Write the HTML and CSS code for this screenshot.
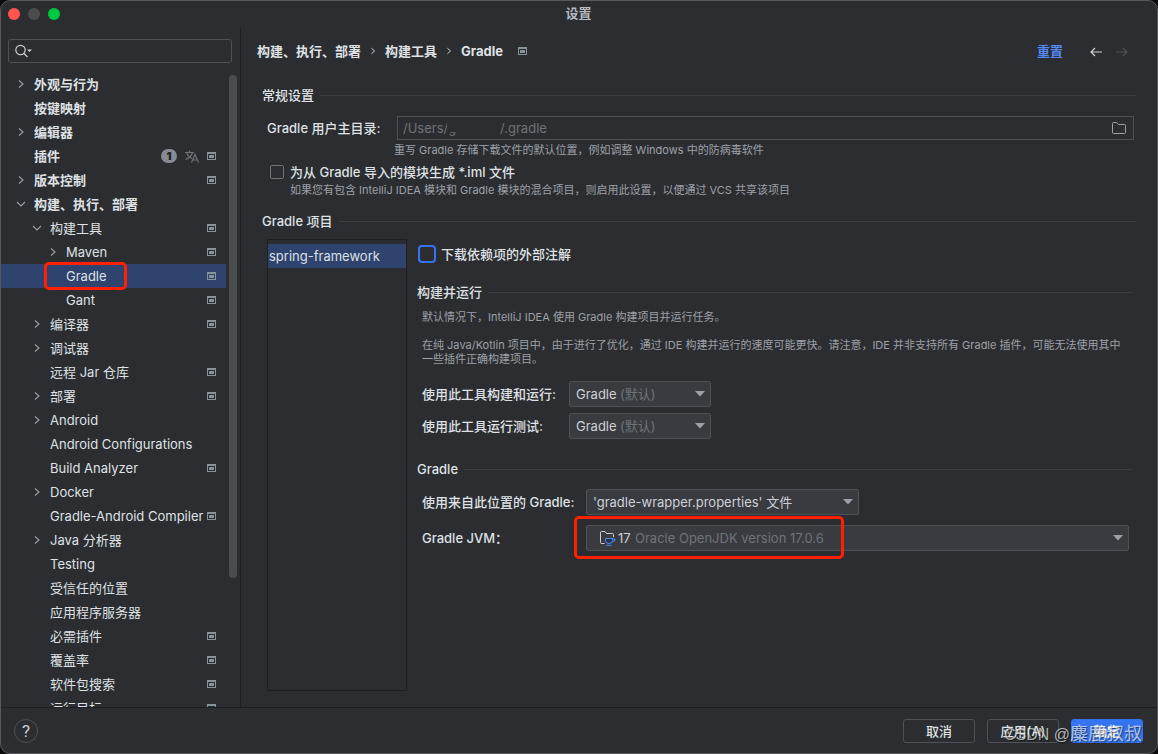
FILE: index.html
```html
<!DOCTYPE html>
<html lang="zh-CN">

<head>
  <meta charset="UTF-8">
  <title>设置</title>
  <link rel="stylesheet" href="styles.css">
</head>

<body>
  <svg class="sprite" width="0" height="0">
    <symbol id="right" viewBox="0 0 8 10"><path d="M2 1.5L6 5L2 8.5" fill="none" stroke="currentColor" stroke-width="1.1"/></symbol>
    <symbol id="down" viewBox="0 0 10 8"><path d="M1 2L5 6L9 2" fill="none" stroke="currentColor" stroke-width="1.1"/></symbol>
    <symbol id="project" viewBox="0 0 9 8"><path d="M0 0H9V8H0ZM1 2V7H8V2Z" fill="currentColor" fill-rule="evenodd"/><path d="M2 3H7V6H2Z" fill="currentColor"/></symbol>
    <symbol id="arrow" viewBox="0 0 10 6"><path d="M0 0H10L5 5.500Z" fill="currentColor"/></symbol>
  </svg>

  <div class="window">
    <header class="titlebar">
      <div class="lights">
        <span class="light red"></span>
        <span class="light gray"></span>
        <span class="light green"></span>
      </div>
      <h1>设置</h1>
    </header>

    <div class="content">
      <nav class="sidebar">
        <div class="search">
          <svg width="18" height="14" viewBox="0 0 18 14" fill="none" stroke="#ced0d6" stroke-width="1.2"><circle cx="5.500" cy="6" r="4.700"/><path d="M9 9.500L12.500 13"/><path d="M12 5.500H17L14.500 8Z" fill="#ced0d6" stroke="none"/></svg>
          <input type="text" aria-label="搜索">
        </div>
        <div class="tree-wrap">
          <ul class="tree">
            <li><a href="#" class="top"><svg class="chevron"><use href="#right"/></svg><span>外观与行为</span></a></li>
            <li><a href="#" class="top"><i class="chevron"></i><span>按键映射</span></a></li>
            <li><a href="#" class="top"><svg class="chevron"><use href="#right"/></svg><span>编辑器</span></a></li>
            <li><a href="#" class="top"><i class="chevron"></i><span>插件</span>
              <b class="badge">1</b>
              <svg class="lang" viewBox="0 0 14 13" fill="none" stroke="#6f737a" stroke-width="1.200"><path d="M0 2.500H9M4.500 0.500V2.500M7.500 2.500C6.500 6 3.500 8.500 0.500 9.500M1.500 2.500C2.500 5.500 4.500 7.500 7 8.500M6.500 12.500L10 4.500L13.500 12.500M7.800 10H12.200"/></svg>
              <svg class="project"><use href="#project"/></svg></a></li>
            <li><a href="#" class="top"><svg class="chevron"><use href="#right"/></svg><span>版本控制</span><svg class="project"><use href="#project"/></svg></a></li>
            <li><a href="#" class="top"><svg class="chevron"><use href="#down"/></svg><span>构建、执行、部署</span></a></li>
            <li><a href="#" class="level1"><svg class="chevron"><use href="#down"/></svg><span>构建工具</span><svg class="project"><use href="#project"/></svg></a></li>
            <li><a href="#" class="level2"><svg class="chevron"><use href="#right"/></svg><span>Maven</span><svg class="project"><use href="#project"/></svg></a></li>
            <li><a href="#" class="level2 selected"><i class="chevron"></i><span>Gradle</span><svg class="project"><use href="#project"/></svg><i class="mark mark-tree"></i></a></li>
            <li><a href="#" class="level2"><i class="chevron"></i><span>Gant</span><svg class="project"><use href="#project"/></svg></a></li>
            <li><a href="#" class="level1"><svg class="chevron"><use href="#right"/></svg><span>编译器</span><svg class="project"><use href="#project"/></svg></a></li>
            <li><a href="#" class="level1"><svg class="chevron"><use href="#right"/></svg><span>调试器</span></a></li>
            <li><a href="#" class="level1"><i class="chevron"></i><span>远程 Jar 仓库</span><svg class="project"><use href="#project"/></svg></a></li>
            <li><a href="#" class="level1"><svg class="chevron"><use href="#right"/></svg><span>部署</span><svg class="project"><use href="#project"/></svg></a></li>
            <li><a href="#" class="level1"><svg class="chevron"><use href="#right"/></svg><span>Android</span></a></li>
            <li><a href="#" class="level1"><i class="chevron"></i><span>Android Configurations</span></a></li>
            <li><a href="#" class="level1"><i class="chevron"></i><span>Build Analyzer</span><svg class="project"><use href="#project"/></svg></a></li>
            <li><a href="#" class="level1"><svg class="chevron"><use href="#right"/></svg><span>Docker</span></a></li>
            <li><a href="#" class="level1"><i class="chevron"></i><span>Gradle-Android Compiler</span><svg class="project"><use href="#project"/></svg></a></li>
            <li><a href="#" class="level1"><svg class="chevron"><use href="#right"/></svg><span>Java 分析器</span></a></li>
            <li><a href="#" class="level1"><i class="chevron"></i><span>Testing</span></a></li>
            <li><a href="#" class="level1"><i class="chevron"></i><span>受信任的位置</span></a></li>
            <li><a href="#" class="level1"><i class="chevron"></i><span>应用程序服务器</span></a></li>
            <li><a href="#" class="level1"><i class="chevron"></i><span>必需插件</span><svg class="project"><use href="#project"/></svg></a></li>
            <li><a href="#" class="level1"><i class="chevron"></i><span>覆盖率</span><svg class="project"><use href="#project"/></svg></a></li>
            <li><a href="#" class="level1"><i class="chevron"></i><span>软件包搜索</span><svg class="project"><use href="#project"/></svg></a></li>
            <li><a href="#" class="level1"><i class="chevron"></i><span>运行目标</span><svg class="project"><use href="#project"/></svg></a></li>
          </ul>
          <div class="scrollbar"></div>
        </div>
      </nav>

      <main class="main">
        <div class="breadcrumb">
          <a href="#">构建、执行、部署</a>
          <svg class="sep"><use href="#right"/></svg>
          <a href="#">构建工具</a>
          <svg class="sep"><use href="#right"/></svg>
          <span>Gradle</span>
          <svg class="project"><use href="#project"/></svg>
          <a href="#" class="reset">重置</a>
          <button class="nav" aria-label="后退"><svg width="12" height="10" viewBox="0 0 12 10"><path d="M12 5H1M5 1L1 5L5 9" fill="none" stroke="#ced0d6" stroke-width="1.200"/></svg></button>
          <button class="nav" aria-label="前进" disabled><svg width="12" height="10" viewBox="0 0 12 10"><path d="M0 5H11M7 1L11 5L7 9" fill="none" stroke="#4e5157" stroke-width="1.200"/></svg></button>
        </div>

        <h2>常规设置</h2>
        <div class="home-row">
          <label for="home">Gradle 用户主目录:</label>
          <div class="home-field">
            <input type="text" id="home" value="/Users/g&nbsp;&nbsp;&nbsp;&nbsp;&nbsp;&nbsp;&nbsp;&nbsp;&nbsp;&nbsp;&nbsp;&nbsp;/.gradle">
            <span class="redacted"></span>
            <button aria-label="浏览"><svg width="14" height="12" viewBox="0 0 14 12"><path d="M0.500 1.500Q0.500 0.500 1.500 0.500H4.800L6.500 2.500H12.500Q13.500 2.500 13.500 3.500V10.500Q13.500 11.500 12.500 11.500H1.500Q0.500 11.500 0.500 10.500Z" fill="none" stroke="#9da0a8"/></svg></button>
          </div>
        </div>
        <p class="hint home-hint">重写 Gradle 存储下载文件的默认位置，例如调整 Windows 中的防病毒软件</p>
        <div class="check iml">
          <input type="checkbox" id="iml">
          <label for="iml">为从 Gradle 导入的模块生成 *.iml 文件</label>
        </div>
        <p class="hint iml-hint">如果您有包含 IntelliJ IDEA 模块和 Gradle 模块的混合项目，则启用此设置，以便通过 VCS 共享该项目</p>

        <h2 class="projects-title">Gradle 项目</h2>
        <div class="projects">
          <ul class="project-list">
            <li>spring-framework</li>
          </ul>
          <div class="details">
            <div class="check annotations">
              <input type="checkbox" id="annotations" class="focused">
              <label for="annotations">下载依赖项的外部注解</label>
            </div>

            <h2 class="build-title">构建并运行</h2>
            <div class="group">
              <p class="hint">默认情况下，IntelliJ IDEA 使用 Gradle 构建项目并运行任务。</p>
              <p class="hint note">在纯 Java/Kotlin 项目中，由于进行了优化，通过 IDE 构建并运行的速度可能更快。请注意，IDE 并非支持所有 Gradle 插件，可能无法使用其中一些插件正确构建项目。</p>
              <div class="fields">
                <label for="build">使用此工具构建和运行:</label>
                <div class="combo">
                  <select id="build"><option>Gradle</option></select>
                  <span class="suffix">(默认)</span>
                  <svg class="arrow"><use href="#arrow"/></svg>
                </div>
                <label for="test">使用此工具运行测试:</label>
                <div class="combo">
                  <select id="test"><option>Gradle</option></select>
                  <span class="suffix">(默认)</span>
                  <svg class="arrow"><use href="#arrow"/></svg>
                </div>
              </div>
            </div>

            <h2 class="gradle-title">Gradle</h2>
            <div class="group fields gradle-fields">
              <label for="dist">使用来自此位置的 Gradle:</label>
              <div class="combo dist">
                <select id="dist"><option>'gradle-wrapper.properties' 文件</option></select>
                <svg class="arrow"><use href="#arrow"/></svg>
              </div>
              <label for="jvm">Gradle JVM：</label>
              <div class="combo jvm">
                <select id="jvm"><option>17</option></select>
                <svg class="jdk" width="16" height="15" viewBox="0 0 16 15" fill="none"><path d="M4.500 12.500H1.500Q0.500 12.500 0.500 11.500V1.500Q0.500 0.500 1.500 0.500H5L6.500 2.500H12.500Q13.500 2.500 13.500 3.500V6" stroke="#ced0d6"/><path d="M5.500 7.500H12.500V9.500Q12.500 12.500 9 12.500Q5.500 12.500 5.500 9.500Z" fill="#25324d" stroke="#548af7"/><path d="M12.500 8H15V9Q15 10.500 12.500 10.500M6.500 14.300H11.500" stroke="#548af7"/></svg>
                <span class="suffix">Oracle OpenJDK version 17.0.6</span>
                <svg class="arrow"><use href="#arrow"/></svg>
                <i class="mark mark-jvm"></i>
              </div>
            </div>
          </div>
        </div>
      </main>
    </div>

    <footer class="footer">
      <button class="help" aria-label="帮助">?</button>
      <button class="btn">取消</button>
      <button class="btn">应用(A)</button>
      <button class="btn primary">确定</button>
      <span class="watermark">CSDN @<span class="author">麋鹿叔叔</span></span>
    </footer>
  </div>
</body>

</html>
```

FILE: styles.css
```css
* {
  box-sizing: border-box;
}

body {
  margin: 0;
  background: #0c0c0d;
  color: #dfe1e5;
  font: 500 13px/16px Inter, "Noto Sans CJK SC", sans-serif;
}

h1, h2, p, ul {
  margin: 0;
  padding: 0;
  font-size: 13px;
}

ul {
  list-style: none;
}

a {
  color: inherit;
  text-decoration: none;
}

input, select, button {
  font: inherit;
  color: inherit;
  margin: 0;
}

.sprite {
  position: absolute;
}

.window {
  position: relative;
  display: flex;
  flex-direction: column;
  height: 100vh;
  background: #2b2d30;
  border: 1px solid #56585b;
  border-radius: 10px;
  overflow: hidden;
}

.titlebar {
  display: grid;
  grid-template-columns: 1fr auto 1fr;
  align-items: center;
  height: 26px;
  padding: 0 8px 0 7px;
}

.titlebar h1 {
  color: #b4b8bf;
  font-weight: 700;
  padding-bottom: 2px;
}

.lights {
  display: flex;
  gap: 8px;
}

.light {
  width: 12px;
  height: 12px;
  border-radius: 50%;
}

.red {
  background: #ff544d;
}

.gray {
  background: #4b4c4e;
}

.green {
  background: #00c840;
}

.content {
  display: flex;
  flex: 1;
  min-height: 0;
}

/* Sidebar */
.sidebar {
  display: flex;
  flex-direction: column;
  width: 240px;
  border-right: 1px solid #1e1f22;
  padding-top: 12px;
}

.search {
  display: flex;
  align-items: center;
  height: 24px;
  margin: 0 8px 0 7px;
  padding-left: 6px;
  border: 1px solid #4e5157;
  border-radius: 3px;
}

.search input {
  flex: 1;
  min-width: 0;
  background: none;
  border: none;
  outline: none;
}

.tree-wrap {
  display: flex;
  gap: 3px;
  flex: 1;
  min-height: 0;
  padding-top: 9px;
  overflow: hidden;
}

.tree {
  flex: 1;
  min-width: 0;
}

.tree a {
  position: relative;
  display: flex;
  align-items: center;
  gap: 8px;
  height: 24px;
  padding: 0 10px 0 15px;
  white-space: nowrap;
  font-weight: 400;
}

.tree span {
  flex: 1;
  min-width: 0;
}

.tree .top {
  font-weight: 700;
}

.tree .level1 {
  padding-left: 31px;
}

.tree .level2 {
  padding-left: 47px;
}

.tree .selected {
  background: #2e436e;
}

.chevron {
  flex: none;
  width: 10px;
  height: 10px;
  color: #9da0a8;
}

.project {
  flex: none;
  width: 9px;
  height: 8px;
  color: #87939a;
}

.badge {
  width: 16px;
  height: 14px;
  border-radius: 7px;
  background: #868a91;
  color: #1e1f22;
  font-size: 11px;
  line-height: 14px;
  text-align: center;
}

.lang {
  width: 14px;
  height: 13px;
}

.scrollbar {
  flex: none;
  width: 8px;
  height: 503px;
  margin: 3px 3px 0 0;
  border-radius: 4px;
  background: #4b4c4e;
}

/* Main panel */
.main {
  display: flex;
  flex-direction: column;
  flex: 1;
  min-width: 0;
  padding: 16px 21px 16px;
}

.breadcrumb {
  display: flex;
  align-items: center;
  gap: 8px;
  height: 16px;
  margin-left: -5px;
  font-weight: 700;
}

.sep {
  width: 8px;
  height: 8px;
}

.breadcrumb .project {
  margin-left: 7px;
}

.reset {
  margin-left: auto;
  margin-right: 12px;
  color: #548af7;
}

.nav {
  display: flex;
  width: 26px;
  padding: 2px 7px 0;
  margin-right: -8px;
  background: none;
  border: none;
}

.nav:last-child {
  margin-right: 1px;
}

h2 {
  display: flex;
  align-items: center;
  gap: 6px;
  font-weight: 500;
}

h2::after {
  content: "";
  flex: 1;
  height: 1px;
  background: #3b3d41;
}

.breadcrumb + h2 {
  margin-top: 28px;
}

.home-row {
  display: flex;
  align-items: center;
  margin: 13px 2px 0 5px;
}

.home-row label {
  width: 130px;
}

.home-field {
  position: relative;
  display: flex;
  align-items: center;
  flex: 1;
  height: 24px;
  padding: 0 7px 0 5px;
  border: 1px solid #4e5157;
}

.home-field input {
  flex: 1;
  padding: 0;
  background: none;
  border: none;
  outline: none;
  color: #6f737a;
  font-weight: 400;
}

.home-field button {
  display: flex;
  padding: 0;
  background: none;
  border: none;
}

.redacted {
  position: absolute;
  left: 49px;
  top: 2px;
  width: 48px;
  height: 13px;
  background: #2b2d30;
}

.hint {
  color: #9da0a8;
  font-size: 11px;
  line-height: 14px;
  font-weight: 400;
}

.home-hint {
  margin: 3px 0 0 132px;
}

.check {
  display: flex;
  align-items: center;
  gap: 6px;
}

.check input {
  appearance: none;
  width: 14px;
  height: 14px;
  border: 1px solid #6f737a;
  border-radius: 2px;
}

.check .focused {
  width: 18px;
  height: 18px;
  border: 2px solid #3574f0;
  border-radius: 4px;
}

.iml {
  margin: 7px 0 0 8px;
}

.iml-hint {
  margin: 3px 0 0 28px;
}

.projects-title {
  margin-top: 16px;
}

.projects {
  display: flex;
  gap: 10px;
  flex: 1;
  margin: 10px 4px 0 5px;
}

.project-list {
  width: 140px;
  padding-top: 4px;
  border: 1px solid #1e1f22;
}

.project-list li {
  padding: 4px 1px;
  background: #2e436e;
  font-weight: 400;
}

.details {
  flex: 1;
}

.annotations {
  gap: 5px;
  padding: 6px 0 0 1px;
}

.build-title {
  margin-top: 21px;
}

.group {
  padding: 0 3px 0 5px;
}

.build-title + .group {
  padding-top: 10px;
}

.note {
  margin-top: 14px;
}

.fields {
  display: grid;
  grid-template-columns: 147px 1fr;
  align-items: center;
  row-gap: 6px;
}

.note + .fields {
  margin-top: 15px;
}

.combo {
  position: relative;
  display: flex;
  align-items: center;
  width: 142px;
  height: 26px;
  border: 1px solid #4e5157;
  border-radius: 2px;
  background: #393b40;
  color: #ced0d6;
  font-weight: 400;
}

.combo select {
  appearance: none;
  width: 100%;
  height: 100%;
  padding: 0 6px;
  background: none;
  border: none;
  outline: none;
}

/* gray text shown after the selected value */
.suffix {
  position: absolute;
  left: 50px;
  color: #6f737a;
  pointer-events: none;
}

.arrow {
  position: absolute;
  right: 5px;
  width: 10px;
  height: 6px;
  color: #9da0a8;
  pointer-events: none;
}

.gradle-title {
  margin-top: 22px;
}

.gradle-fields {
  grid-template-columns: 164px 1fr;
  row-gap: 10px;
  margin-top: 12px;
}

.dist {
  width: 273px;
}

.jvm {
  width: auto;
}

.jvm select {
  padding-left: 31px;
}

.jdk {
  position: absolute;
  left: 13px;
  pointer-events: none;
}

.jvm .suffix {
  left: 48px;
}

/* Red highlight frames */
.mark {
  position: absolute;
  border: 3px solid #ff2000;
  border-radius: 5px;
  pointer-events: none;
}

.mark-tree {
  left: 43px;
  top: -2px;
  width: 83px;
  height: 28px;
}

.mark-jvm {
  left: -13px;
  top: -10px;
  width: 270px;
  height: 43px;
}

/* Footer */
.footer {
  display: flex;
  align-items: center;
  gap: 12px;
  height: 46px;
  padding: 0 14px 0 13px;
  border-top: 1px solid #1e1f22;
}

.help {
  width: 24px;
  height: 24px;
  margin-right: auto;
  padding: 0;
  border: 1px solid #4e5157;
  border-radius: 50%;
  background: none;
  color: #ced0d6;
  font: 400 17px/22px Roboto, sans-serif;
}

.btn {
  width: 72px;
  height: 24px;
  padding: 0;
  border: 1px solid #4e5157;
  border-radius: 3px;
  background: none;
}

.primary {
  border-color: #3574f0;
  background: #3574f0;
  color: #fff;
  font-weight: 700;
}

.watermark {
  position: absolute;
  right: 15px;
  bottom: 6px;
  color: rgba(255, 255, 255, 0.65);
  font: 400 16px/24px "Liberation Sans", "Noto Sans CJK SC", sans-serif;
  text-shadow: 1px 1px 1px rgba(0, 0, 0, 0.5);
  pointer-events: none;
}

.author {
  font-size: 18px;
}
```
